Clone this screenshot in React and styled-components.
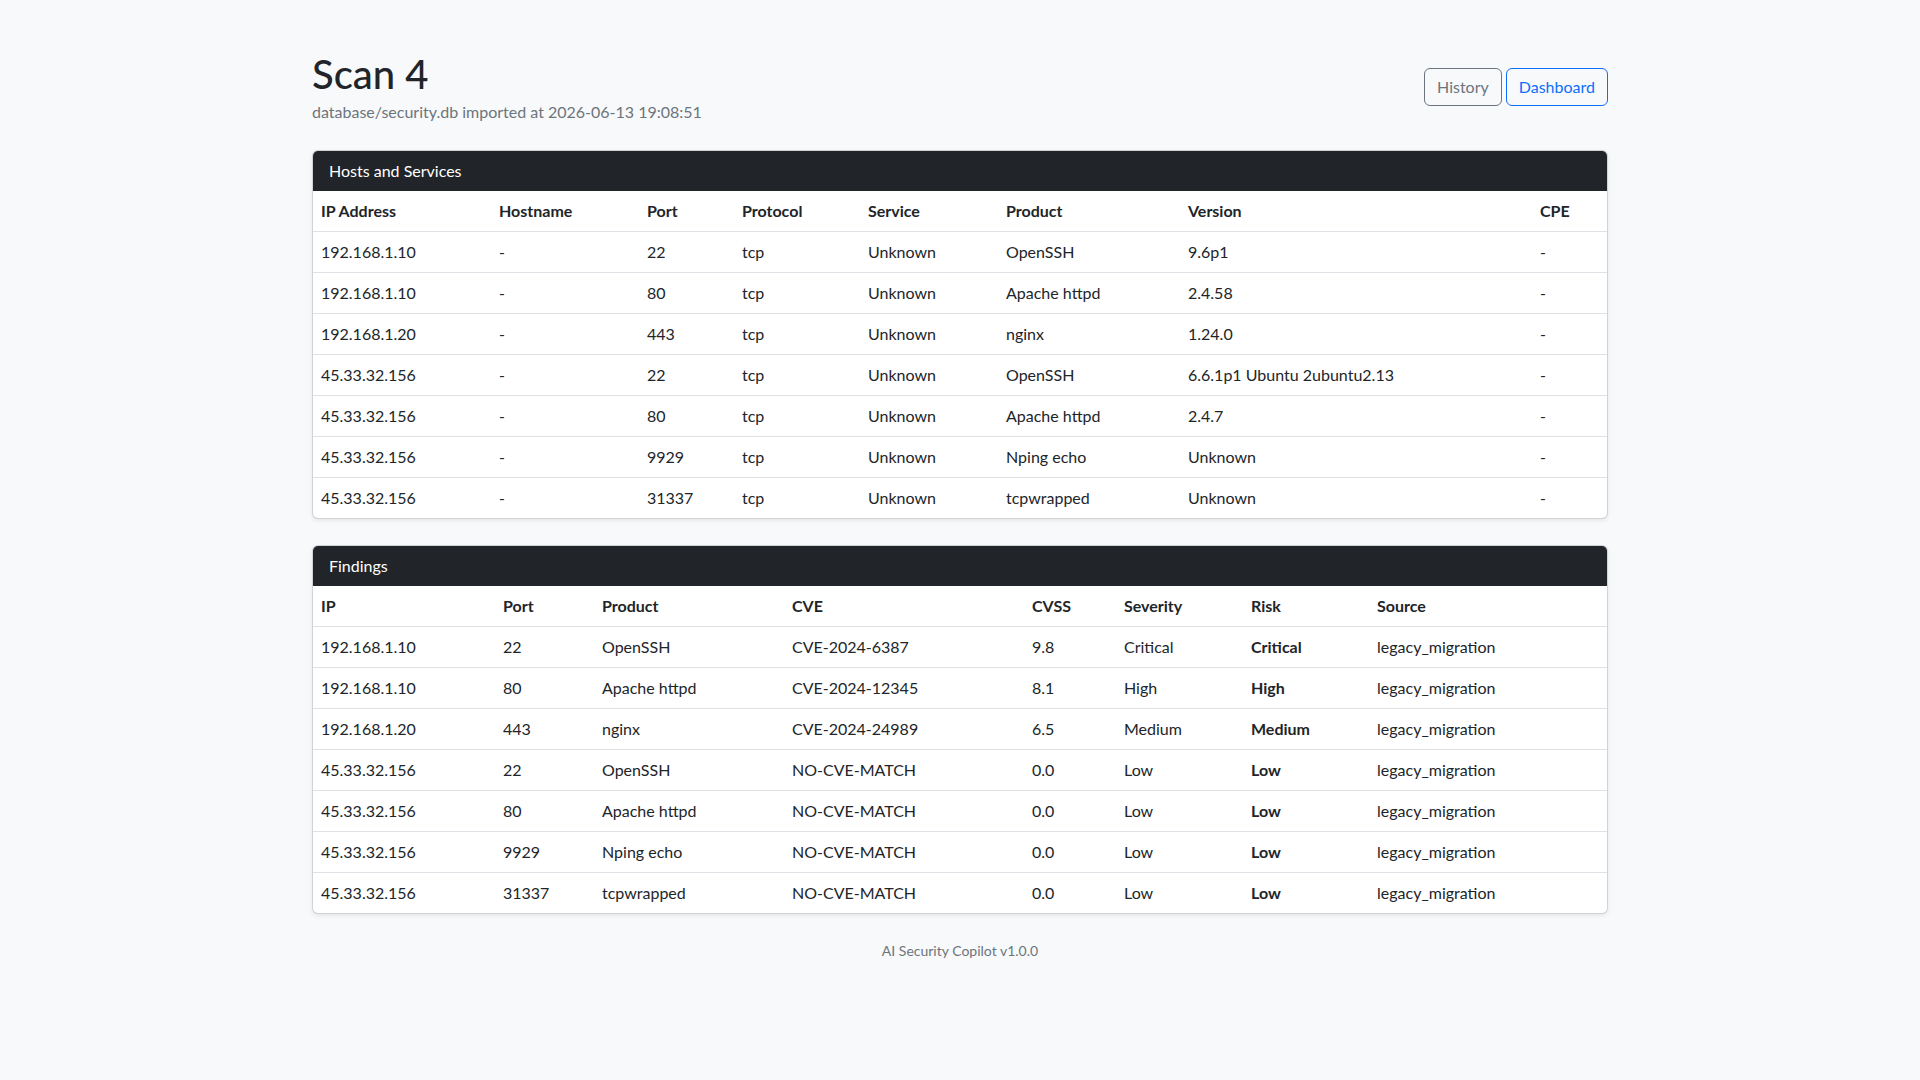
import React from "react";
import styled, { createGlobalStyle } from "styled-components";

const Global = createGlobalStyle`
  body { margin: 0; background: #f8f9fa; color: #212529; font-family: Lato, "Noto Sans", sans-serif; font-size: 16px; line-height: 1.5; }
`;
const Container = styled.div`max-width: 1296px; margin: 0 auto; padding: 50px 0 24px;`;
const Header = styled.div`display: flex; justify-content: space-between; align-items: center; margin-bottom: 26px;`;
const Title = styled.h1`margin: 0; font-size: 40px; font-weight: 500; line-height: 1.2;`;
const Sub = styled.div`color: #6c757d; font-size: 16px; margin-top: 2px;`;
const Buttons = styled.div`display: flex; gap: 4px;`;
const Btn = styled.button`
  font: inherit; font-size: 16px; padding: 6px 12px; border-radius: 6px; background: transparent;
  border: 1px solid ${p => p.$c}; color: ${p => p.$c}; line-height: 24px;
`;
const Card = styled.div`background: #fff; border: 1px solid rgba(0,0,0,.175); border-radius: 6px; box-shadow: 0 .125rem .25rem rgba(0,0,0,.075); margin-bottom: 26px; overflow: hidden;`;
const CardHead = styled.div`background: #212529; color: #fff; padding: 8px 16px; line-height: 24px;`;
const Table = styled.table`width: 100%; border-collapse: collapse; table-layout: fixed;`;
const Th = styled.th`text-align: left; font-weight: 700; padding: 8px; border-bottom: 1px solid #dee2e6; line-height: 24px;`;
const Td = styled.td`padding: 8px; border-bottom: 1px solid #dee2e6; line-height: 24px; font-weight: ${p => p.$b ? 700 : 400}; tr:last-child > & { border-bottom: none; }`;
const Footer = styled.div`text-align: center; color: #6c757d; font-size: 14px; margin-top: 0;`;

const hostsCols = [["IP Address",178],["Hostname",148],["Port",95],["Protocol",126],["Service",138],["Product",182],["Version",352],["CPE",null]];
const hosts = [
  ["192.168.1.10","-","22","tcp","Unknown","OpenSSH","9.6p1","-"],
  ["192.168.1.10","-","80","tcp","Unknown","Apache httpd","2.4.58","-"],
  ["192.168.1.20","-","443","tcp","Unknown","nginx","1.24.0","-"],
  ["45.33.32.156","-","22","tcp","Unknown","OpenSSH","6.6.1p1 Ubuntu 2ubuntu2.13","-"],
  ["45.33.32.156","-","80","tcp","Unknown","Apache httpd","2.4.7","-"],
  ["45.33.32.156","-","9929","tcp","Unknown","Nping echo","Unknown","-"],
  ["45.33.32.156","-","31337","tcp","Unknown","tcpwrapped","Unknown","-"],
];
const findCols = [["IP",182],["Port",99],["Product",190],["CVE",240],["CVSS",92],["Severity",127],["Risk",126],["Source",null]];
const finds = [
  ["192.168.1.10","22","OpenSSH","CVE-2024-6387","9.8","Critical","Critical"],
  ["192.168.1.10","80","Apache httpd","CVE-2024-12345","8.1","High","High"],
  ["192.168.1.20","443","nginx","CVE-2024-24989","6.5","Medium","Medium"],
  ["45.33.32.156","22","OpenSSH","NO-CVE-MATCH","0.0","Low","Low"],
  ["45.33.32.156","80","Apache httpd","NO-CVE-MATCH","0.0","Low","Low"],
  ["45.33.32.156","9929","Nping echo","NO-CVE-MATCH","0.0","Low","Low"],
  ["45.33.32.156","31337","tcpwrapped","NO-CVE-MATCH","0.0","Low","Low"],
].map(r => [...r, "legacy_migration"]);

function DataCard({ title, cols, rows, boldCol }) {
  return (
    <Card>
      <CardHead>{title}</CardHead>
      <Table>
        <colgroup>{cols.map(([n, w]) => <col key={n} style={w ? { width: w } : undefined} />)}</colgroup>
        <thead><tr>{cols.map(([n]) => <Th key={n}>{n}</Th>)}</tr></thead>
        <tbody>{rows.map((r, i) => <tr key={i}>{r.map((c, j) => <Td key={j} $b={j === boldCol}>{c}</Td>)}</tr>)}</tbody>
      </Table>
    </Card>
  );
}

export default function App() {
  return (
    <>
      <Global />
      <Container>
        <Header>
          <div>
            <Title>Scan 4</Title>
            <Sub>database/security.db imported at 2026-06-13 19:08:51</Sub>
          </div>
          <Buttons>
            <Btn $c="#6c757d">History</Btn>
            <Btn $c="#0d6efd">Dashboard</Btn>
          </Buttons>
        </Header>
        <DataCard title="Hosts and Services" cols={hostsCols} rows={hosts} />
        <DataCard title="Findings" cols={findCols} rows={finds} boldCol={6} />
        <Footer>AI Security Copilot v1.0.0</Footer>
      </Container>
    </>
  );
}
